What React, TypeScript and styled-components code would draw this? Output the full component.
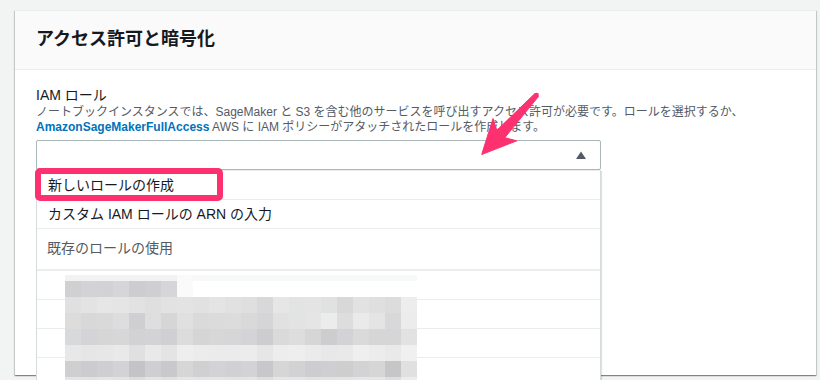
import React from "react";
import styled, { createGlobalStyle } from "styled-components";

const GlobalStyle = createGlobalStyle`
  html, body {
    margin: 0;
    padding: 0;
    overflow: hidden;
    background: #f2f3f3;
  }
  body {
    font-family: "Liberation Sans", "Noto Sans CJK JP", sans-serif;
    color: #16191f;
  }
`;

const Page = styled.div`
  position: relative;
  box-sizing: border-box;
  height: 380px;
  padding: 10px 4px 0 15px;
  background: #f2f3f3;
`;

const Card = styled.section`
  position: relative;
  height: 365px;
  background: #ffffff;
  box-shadow: 0 1px 1px 0 rgba(0, 28, 36, 0.3), 1px 1px 1px 0 rgba(0, 28, 36, 0.15),
    -1px 1px 1px 0 rgba(0, 28, 36, 0.15);
  border-top: 1px solid #eaeded;
  box-sizing: border-box;
`;

const CardHeader = styled.header`
  background: #fafafa;
  padding: 17px 21px 19px;
  border-bottom: 1px solid #eaeded;
`;

const Title = styled.h2`
  margin: 0;
  font-size: 18px;
  line-height: 22px;
  font-weight: 700;
  color: #16191f;
`;

const CardBody = styled.div`
  padding: 15px 21px;
`;

const FieldLabel = styled.div`
  font-size: 14px;
  line-height: 20px;
  color: #16191f;
`;

const Description = styled.div`
  font-size: 12px;
  line-height: 15px;
  color: #545b64;
`;

const Link = styled.a`
  color: #0073bb;
  font-weight: 700;
  text-decoration: none;
`;

const SelectWrap = styled.div`
  position: relative;
  width: 565px;
  margin-top: 5px;
`;

const SelectTrigger = styled.div`
  box-sizing: border-box;
  height: 30px;
  display: flex;
  align-items: center;
  justify-content: flex-end;
  padding-right: 14px;
  border: 1px solid #aab7b8;
  border-radius: 2px;
  background: #fff;
`;

const Dropdown = styled.ul`
  position: absolute;
  top: 100%;
  left: 0;
  right: 0;
  margin: 0;
  padding: 0;
  list-style: none;
  background: #fff;
  border: 1px solid #d5dbdb;
  border-top-color: #eaeded;
  box-shadow: 1px 1px 1px 0 rgba(0, 28, 36, 0.12);
  z-index: 5;
`;

const Option = styled.li<{ $group?: boolean }>`
  box-sizing: content-box;
  height: ${(p) => (p.$group ? "38px" : "28px")};
  padding: ${(p) => (p.$group ? "0 10px 2px" : "0 11px")};
  line-height: ${(p) => (p.$group ? "38px" : "28px")};
  font-size: 14px;
  color: ${(p) => (p.$group ? "#545b64" : "#16191f")};
  border-bottom: ${(p) => (p.$group ? "2px" : "1px")} solid #eaeded;
  white-space: nowrap;
`;

const Highlight = styled.div`
  position: absolute;
  left: -2px;
  top: -3px;
  width: 188px;
  height: 33px;
  box-sizing: border-box;
  border: 6px solid #fd316f;
  border-radius: 5px;
  pointer-events: none;
`;

const Mosaic = styled.svg`
  position: absolute;
  left: 28px;
  top: 104px;
  display: block;
`;

const ArrowMark = styled.svg`
  position: absolute;
  left: 476px;
  top: 88px;
  display: block;
  z-index: 10;
  pointer-events: none;
`;

const rows: string[][] = [
  "d0d0d2 d3d3d5 d2d2d4 d6d6d8 cdcdd0 cfcfd2 d6d6d8 fafafa ffffff ffffff ffffff ffffff ffffff ffffff ffffff ffffff ffffff ffffff ffffff ffffff ffffff ffffff".split(" "),
  "e0e0e1 e3e3e4 e6e6e7 e5e5e6 e2e2e3 dfdfe0 e2e2e3 e3e3e3 e1e1e2 e4e4e5 e1e1e2 dfdfe0 d8d8da e6e6e6 e2e3e3 e4e4e4 e0e1e1 d8d8d9 e2e2e2 dfdfe0 dcdcdd ededed".split(" "),
  "dcdcdd d8d8d9 d9d9da dddddf cfcfd1 dedede d6d6d7 e0e0e1 dadadb dbdbdc dcdcdd d9d9da d5d5d7 e1e1e1 e3e3e3 e5e5e5 ececec dddddd eaeaea e4e4e4 d8d8da ececec".split(" "),
  "d8d9da d4d4d6 d6d6d7 d7d7d8 d2d2d4 d3d3d5 d0d0d2 dcdcdc d5d5d6 d7d7d8 d6d6d8 d4d4d6 cdcdcf dadadb dddddd d6d6d7 cdcdcf d3d3d5 dadadb d6d6d7 d6d6d7 e2e2e2".split(" "),
  "e8e8e8 e6e6e6 e7e7e8 e9e9e9 e0e0e1 e9e9e9 e4e4e5 eeeeee ececec ebebeb ebebeb ececec e6e6e6 ededed eeeeee ebebeb e8e8e8 e9e9e9 efefef ececec e9e9e9 f0f0f0".split(" "),
  "cfcfd1 ccccce cfcfd1 d3d3d5 c4c4c7 cfcfd1 c9c9cc d6d6d7 d0d0d2 d3d3d5 d1d1d3 d3d3d5 c8c8ca d6d6d7 d2d2d4 cdcdcf cfcfd1 cecece d3d3d5 d6d6d7 c6c6c8 e0e0e0".split(" "),
  "e4e4e4 e2e2e2 e5e5e5 e3e3e3 dcdcdc e4e4e4 e0e0e0 e6e6e6 e4e4e4 e5e5e5 e3e3e3 e4e4e4 dedede e6e6e6 e5e5e5 e2e2e2 e3e3e3 e4e4e4 e6e6e6 e5e5e5 dedede ececec".split(" "),
];

const PixelBlur: React.FC = () => {
  const cell = 16;
  const band = 6;
  const cols = 22;
  return (
    <Mosaic width={cols * cell} height={band + rows.length * cell} aria-hidden="true">
      {Array.from({ length: cols }).map((_, c) => (
        <rect
          key={`b${c}`}
          x={c * cell}
          y={0}
          width={cell}
          height={band}
          fill={c < 7 ? "#f2f2f3" : c === 7 ? "#fafafa" : "#f7f8f8"}
        />
      ))}
      {rows.map((r, ri) =>
        r.map((col, ci) => (
          <rect
            key={`${ri}-${ci}`}
            x={ci * cell}
            y={band + ri * cell}
            width={cell}
            height={cell}
            fill={`#${col}`}
          />
        ))
      )}
    </Mosaic>
  );
};

const CaretUp: React.FC = () => (
  <svg width="10" height="8" viewBox="0 0 10 8" aria-hidden="true">
    <polygon points="0,8 5,0.5 10,8" fill="#545b64" />
  </svg>
);

const Arrow: React.FC = () => (
  <ArrowMark width="66" height="72" viewBox="476 88 66 72" aria-hidden="true">
    <polygon
      points="481.7,154.5 516.8,140.8 504.8,137.7 538.4,96.6 535.0,93.4 496.8,130.3 493.0,118.5"
      fill="#fd316f"
      stroke="#fd316f"
      strokeWidth="1"
      strokeLinejoin="round"
    />
    <circle cx="536.7" cy="95" r="2.2" fill="#fd316f" />
  </ArrowMark>
);

export default function App() {
  return (
    <>
      <GlobalStyle />
      <Page>
        <Card>
          <CardHeader>
            <Title>アクセス許可と暗号化</Title>
          </CardHeader>
          <CardBody>
            <FieldLabel>IAM ロール</FieldLabel>
            <Description>
              ノートブックインスタンスでは、SageMaker と S3 を含む他のサービスを呼び出すアクセス許可が必要です。ロールを選択するか、
              <br />
              <Link>AmazonSageMakerFullAccess</Link> AWS に IAM ポリシーがアタッチされたロールを作成します。
            </Description>
            <SelectWrap>
              <SelectTrigger>
                <CaretUp />
              </SelectTrigger>
              <Dropdown>
                <Option>新しいロールの作成</Option>
                <Option>カスタム IAM ロールの ARN の入力</Option>
                <Option $group>既存のロールの使用</Option>
                <Option />
                <Option />
                <Option />
                <Option />
                <PixelBlur />
                <Highlight />
              </Dropdown>
            </SelectWrap>
          </CardBody>
        </Card>
        <Arrow />
      </Page>
    </>
  );
}
